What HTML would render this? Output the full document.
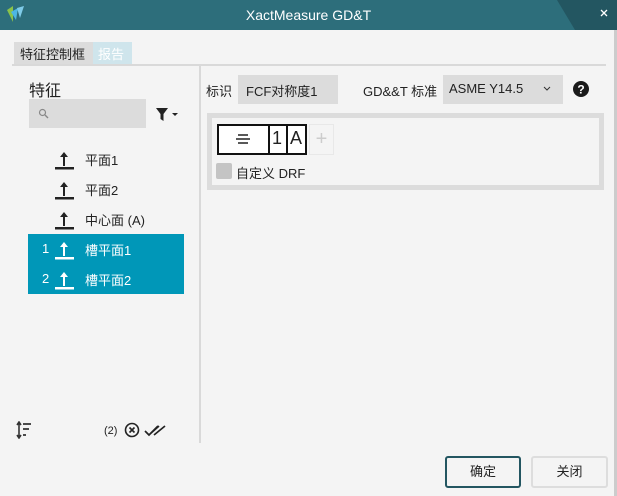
<!DOCTYPE html>
<html><head><meta charset="utf-8"><style>
*{margin:0;padding:0;box-sizing:border-box}
body{width:617px;height:496px;background:#f4f4f4;font-family:"Liberation Sans","Noto Sans CJK SC",sans-serif;font-size:13px;color:#222;position:relative;overflow:hidden}
.a{position:absolute}
.title{left:0;top:0;width:617px;height:30px;background:#2d6e7b}
.row{position:absolute;left:28px;width:156px;height:30px;font-size:13px}
.ic{position:absolute;left:26px;top:6px;width:20px;height:20px}
.lb{position:absolute;left:57px;top:6px}
</style></head><body>
<div class="a title"></div>
<svg class="a" style="left:0;top:0" width="617" height="30"><polygon points="557,0 617,0 617,30 575,30" fill="#235661"/>
<path d="M7 10 L13 6 L13 22 Z" fill="#8bc34a"/><path d="M11 12 L18 8 L16 20 Z" fill="#4db6e2"/><path d="M17 8 L24 6 L20 18 Z" fill="#7fcbe8"/>
<path d="M601 10 L607 16 M607 10 L601 16" stroke="#fff" stroke-width="1.3"/></svg>
<div class="a" style="left:0;top:7px;width:617px;text-align:center;color:#fff;font-size:14px">XactMeasure GD&amp;T</div>
<div class="a" style="left:614px;top:30px;width:3px;height:466px;background:#ccc"></div>
<div class="a" style="left:14px;top:42px;width:79px;height:22px;background:#dcdcdc;padding:2px 6px;font-size:13px">特征控制框</div>
<div class="a" style="left:93px;top:42px;width:39px;height:22px;background:#cfe5ec;color:#fff;padding:2px 5px;font-size:13px">报告</div>
<div class="a" style="left:12px;top:64px;width:594px;height:2px;background:#d9d9d9"></div>
<div class="a" style="left:199px;top:66px;width:2px;height:377px;background:#d9d9d9"></div>
<div class="a" style="left:29px;top:77px;font-size:16px">特征</div>
<div class="a" style="left:29px;top:99px;width:117px;height:29px;background:#dcdcdc"></div>
<svg class="a" style="left:38px;top:108px" width="12" height="12"><circle cx="4.5" cy="4.5" r="3" fill="none" stroke="#888" stroke-width="1.2"/><path d="M7 7 L10 10" stroke="#888" stroke-width="1.4"/></svg>
<svg class="a" style="left:155px;top:107px" width="28" height="16"><path d="M1 1 H13 L8.5 7 V14 L5.5 12 V7 Z" fill="#222"/><path d="M17 6 H23 L20 9 Z" fill="#222"/></svg>
<div class="row" style="top:144px"><svg class="ic"><path d="M10 2 L14 7 H11 V16 H9 V7 H6 Z" fill="#222"/><rect x="1" y="17" width="20" height="2.5" fill="#222"/></svg><span class="lb">平面1</span></div>
<div class="row" style="top:174px"><svg class="ic"><path d="M10 2 L14 7 H11 V16 H9 V7 H6 Z" fill="#222"/><rect x="1" y="17" width="20" height="2.5" fill="#222"/></svg><span class="lb">平面2</span></div>
<div class="row" style="top:204px"><svg class="ic"><path d="M10 2 L14 7 H11 V16 H9 V7 H6 Z" fill="#222"/><rect x="1" y="17" width="20" height="2.5" fill="#222"/></svg><span class="lb">中心面 (A)</span></div>
<div class="a" style="left:28px;top:234px;width:156px;height:60px;background:#0097b8"></div>
<div class="row" style="top:234px;color:#fff"><span class="a" style="left:14px;top:7px">1</span><svg class="ic"><path d="M10 2 L14 7 H11 V16 H9 V7 H6 Z" fill="#fff"/><rect x="1" y="17" width="20" height="2.5" fill="#fff"/></svg><span class="lb">槽平面1</span></div>
<div class="row" style="top:264px;color:#fff"><span class="a" style="left:14px;top:7px">2</span><svg class="ic"><path d="M10 2 L14 7 H11 V16 H9 V7 H6 Z" fill="#fff"/><rect x="1" y="17" width="20" height="2.5" fill="#fff"/></svg><span class="lb">槽平面2</span></div>
<svg class="a" style="left:15px;top:421px" width="24" height="18"><path d="M4 2 V16 M2 4 L4 1 L6 4 M2 14 L4 17 L6 14" stroke="#333" stroke-width="1.6" fill="none"/><path d="M8 3 H16 M8 8 H14 M8 14 H11" stroke="#333" stroke-width="1.8"/></svg>
<div class="a" style="left:104px;top:425px;font-size:11px">(2)</div>
<svg class="a" style="left:124px;top:422px" width="48" height="18"><circle cx="8" cy="8" r="6.5" fill="none" stroke="#222" stroke-width="1.6"/><path d="M5.5 5.5 L10.5 10.5 M10.5 5.5 L5.5 10.5" stroke="#222" stroke-width="1.6"/><path d="M21 9 L25 13 L34 4 M26 12 L35 4 M30 13 L41 4" stroke="#222" stroke-width="1.7" fill="none"/></svg>
<div class="a" style="left:206px;top:81px">标识</div>
<div class="a" style="left:238px;top:75px;width:100px;height:29px;background:#dcdcdc;padding:6px 8px">FCF对称度1</div>
<div class="a" style="left:363px;top:81px">GD&amp;&amp;T 标准</div>
<div class="a" style="left:443px;top:75px;width:120px;height:29px;background:#dcdcdc;padding:6px 6px">ASME Y14.5</div>
<svg class="a" style="left:543px;top:86px" width="8" height="6"><path d="M1 1 L4 4 L7 1" stroke="#333" fill="none"/></svg>
<svg class="a" style="left:572px;top:80px" width="18" height="18"><circle cx="9" cy="9" r="8" fill="#1a1a1a"/><text x="9" y="13.5" font-size="12" font-weight="bold" fill="#fff" text-anchor="middle" font-family="Liberation Sans">?</text></svg>
<div class="a" style="left:207px;top:113px;width:397px;height:77px;border:5px solid #dcdcdc;background:#f4f4f4"></div>
<div class="a" style="left:217px;top:124px;width:90px;height:31px;border:2px solid #111;background:#fff"></div>
<div class="a" style="left:268px;top:124px;width:2px;height:31px;background:#111"></div>
<div class="a" style="left:286px;top:124px;width:2px;height:31px;background:#111"></div>
<svg class="a" style="left:234px;top:131px" width="18" height="16"><path d="M4 4 H14 M2 8 H16 M4 12 H14" stroke="#222" stroke-width="1.5"/></svg>
<div class="a" style="left:272px;top:128px;font-size:18px">1</div>
<div class="a" style="left:290px;top:128px;font-size:18px">A</div>
<div class="a" style="left:309px;top:124px;width:25px;height:31px;border:1px solid #e8e8e8;color:#ccc;font-size:20px;text-align:center;line-height:28px">+</div>
<div class="a" style="left:216px;top:163px;width:16px;height:16px;background:#c4c4c4;border-radius:2px"></div>
<div class="a" style="left:236px;top:163px">自定义 DRF</div>
<div class="a" style="left:445px;top:456px;width:76px;height:32px;border:2px solid #235661;border-radius:3px;text-align:center;line-height:28px">确定</div>
<div class="a" style="left:531px;top:456px;width:77px;height:32px;border:2px solid #ddd;border-radius:3px;text-align:center;line-height:28px">关闭</div>
</body></html>
